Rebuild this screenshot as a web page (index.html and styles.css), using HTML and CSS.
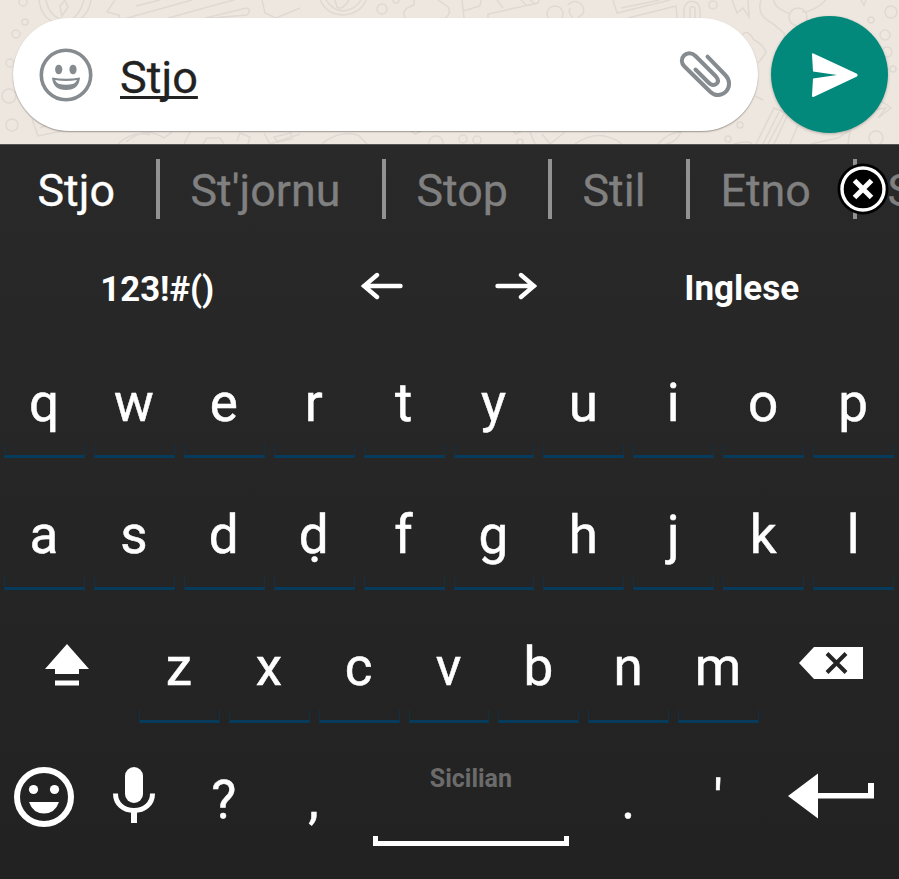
FILE: index.html
```html
<!DOCTYPE html>
<html lang="scn">
<head>
<meta charset="utf-8">
<title>Keyboard</title>
<link rel="stylesheet" href="styles.css">
</head>
<body>
<main class="screen">
  <section class="composer">
    <svg class="doodles" viewBox="0 0 899 144" aria-hidden="true">
      <circle cx="23" cy="2" r="4"/><circle cx="25" cy="22" r="3"/><circle cx="16" cy="34" r="4"/><circle cx="10" cy="63" r="4"/><circle cx="9" cy="96" r="7"/><circle cx="12" cy="125" r="6"/>
      <path d="M39 0Q42 24 65 24Q88 21 91 0M46 0Q49 15 60 19M84 0Q80 14 72 19M60 6L65 0L68 7L62 16Z"/>
      <path d="M115 0L107 12L119 15L120 20L192 0M136 6L160 0M168 18L248 -4M188 20L247 15Q252 10 247 8L205 18M262 0L265 13L276 18L300 8"/>
      <path d="M320 0Q327 15 344 15Q361 13 366 0M326 0Q333 11 344 11Q356 9 361 0M335 0L337 7Q342 11 349 0M405 18Q402 12 407 8L414 5L414 0M438 0Q444 4 448 7Q452 13 445 18M462 0L464 18M463 11L480 6L481 0M488 20L488 14L538 3L539 0M497 0L503 8M521 0L527 6M530 0L535 4"/>
      <circle cx="382" cy="9" r="5"/><circle cx="396" cy="0" r="3"/><circle cx="555" cy="14" r="8"/><path d="M568 5Q575 -2 582 5Q587 14 578 17M570 8Q568 14 573 17"/>
      <path d="M613 0L617 13L670 0M621 8L660 0M628 18L676 6L677 18M684 18V8Q688 -2 697 3Q701 7 700 18M690 18V8Q693 5 695 8V18"/>
      <circle cx="713" cy="5" r="4"/><path d="M732 0L737 13L743 8L749 17L748 0M761 0Q756 15 772 23L784 33Q786 43 782 49M774 0Q773 7 790 14M802 12Q814 12 826 0M861 0L864 5L866 0"/>
      <circle cx="798" cy="17" r="9"/><circle cx="871" cy="20" r="3"/><circle cx="891" cy="12" r="6"/><circle cx="885" cy="35" r="5"/><circle cx="887" cy="52" r="5"/><circle cx="893" cy="69" r="3"/>
      <path d="M742 35Q747 28 754 40Q764 45 766 53L758 63M755 96L763 100M874 96L891 108L878 118L886 108L870 110M750 70Q759 81 751 89"/>
      <path d="M32 119L38 136L92 125M40 128L52 123M118 144Q132 130 150 135M126 142Q145 126 164 138L172 132M184 144L190 132M203 144L207 138H220L224 144M237 141L240 133L250 137L248 144M264 133L270 144L300 134M274 137L291 133L292 139L278 142ZM322 144Q337 130 358 135L367 144M410 130L415 134L421 131M513 131L516 134L521 131M530 132L535 144M542 134L550 144M550 144L565 132M575 144Q599 127 622 144M658 144Q669 132 681 132Q676 143 666 144"/>
      <circle cx="436" cy="143" r="7"/><circle cx="463" cy="139" r="4"/><circle cx="477" cy="140" r="4"/><circle cx="520" cy="142" r="3"/><circle cx="728" cy="139" r="3"/><circle cx="740" cy="125" r="3"/><circle cx="876" cy="138" r="7"/>
      <path d="M756 144L774 108L788 114L774 144M763 144L779 112M768 144L784 114M790 144L798 125M734 144Q749 140 752 144M811 144L838 138L850 130L848 144"/>
    </svg>
    <div class="pill">
      <svg class="pill-smile" viewBox="0 0 54 54">
        <circle cx="27" cy="27" r="24.7" fill="none" stroke="#868b90" stroke-width="3.6"/>
        <ellipse cx="19.7" cy="21.5" rx="3.6" ry="4.8" fill="#868b90"/><ellipse cx="34" cy="21.5" rx="3.6" ry="4.8" fill="#868b90"/>
        <path d="M13 29.500Q27 32 41 29.500Q40 42 27 42Q14 42 13 29.500Z" fill="#868b90"/>
        <path d="M16 32Q27 34 38 32Q37 34.500 34.500 35.700Q27 38 19.500 35.700Q17 34.500 16 32Z" fill="#fff"/>
      </svg>
      <span class="draft">Stjo</span>
      <svg class="clip" viewBox="0 0 54 50">
        <path d="M28.500 6.700L46.700 25.500C51 30 51 36.500 47.500 41C43 46 36.500 46.500 31.500 42L5.500 16.500C2 13 2 8.500 5 5.500C8 2.500 13 2.500 16.500 6L37 26.500C39.500 29.500 39.500 32 37.500 33.800C35.500 35.500 32.500 35.500 30 33L16.500 19.500" fill="none" stroke="#868b90" stroke-width="4" stroke-linecap="round" stroke-linejoin="round"/>
      </svg>
    </div>
    <div class="send">
      <svg viewBox="0 0 117 117"><path d="M42.500 37.500Q41 36.800 41 38.500L42 55.500L66 59L42 62.500L41 79.500Q41 81.500 42.500 81L86 60.500Q87.500 59 86 57.800Z" fill="#fff"/></svg>
    </div>
  </section>

  <section class="keyboard">
    <div class="suggestions">
      <span class="word active w1">Stjo</span>
      <span class="word w2">St'jornu</span>
      <span class="word w3">Stop</span>
      <span class="word w4">Stil</span>
      <span class="word w5">Etno</span>
      <span class="word w6">S</span>
      <svg class="dismiss" viewBox="0 0 52 52">
        <circle cx="26" cy="26" r="25.500" fill="#000"/>
        <circle cx="26" cy="26" r="21" fill="none" stroke="#fff" stroke-width="3.400"/>
        <path d="M17.500 17.500L34.500 34.500M34.500 17.500L17.500 34.500" stroke="#fff" stroke-width="5"/>
      </svg>
    </div>

    <div class="toolbar">
      <span class="tool symbols">123!#()</span>
      <span class="tool"><svg class="arrow" viewBox="0 0 42 28"><path d="M39.500 14H3M16 3L3 14L16 25" /></svg></span>
      <span class="tool"><svg class="arrow" viewBox="0 0 42 28"><path d="M2.500 14H39M26 3L39 14L26 25" /></svg></span>
      <span class="tool">Inglese</span>
    </div>

    <div class="row">
      <span class="key lined">q</span><span class="key lined">w</span><span class="key lined">e</span><span class="key lined">r</span><span class="key lined">t</span><span class="key lined">y</span><span class="key lined">u</span><span class="key lined">i</span><span class="key lined">o</span><span class="key lined">p</span>
    </div>
    <div class="row">
      <span class="key lined">a</span><span class="key lined">s</span><span class="key lined">d</span><span class="key lined">ḍ</span><span class="key lined">f</span><span class="key lined">g</span><span class="key lined">h</span><span class="key lined">j</span><span class="key lined">k</span><span class="key lined">l</span>
    </div>
    <div class="row">
      <span class="key wide"><svg class="shift" viewBox="0 0 44 42"><path d="M22 0L44 25H34V30H10V25H0ZM10 36.500H34V41.500H10Z" fill="#fff"/></svg></span>
      <span class="key lined">z</span><span class="key lined">x</span><span class="key lined">c</span><span class="key lined">v</span><span class="key lined">b</span><span class="key lined">n</span><span class="key lined">m</span>
      <span class="key wide"><svg class="backspace" viewBox="0 0 64 32"><path d="M0 16L15 0H64V32H15Z" fill="#fff"/><path d="M28 6.500L47 25.500M47 6.500L28 25.500" stroke="#242424" stroke-width="4"/></svg></span>
    </div>
    <div class="row">
      <span class="key"><svg class="emoji" viewBox="0 0 60 60"><circle cx="30" cy="30" r="27" fill="none" stroke="#fff" stroke-width="6"/><circle cx="19.500" cy="22.500" r="4.600" fill="#fff"/><circle cx="40.500" cy="22.500" r="4.600" fill="#fff"/><path d="M15 35H45Q41 46.500 30 46.500Q19 46.500 15 35Z" fill="#fff"/></svg></span>
      <span class="key"><svg class="mic" viewBox="0 0 42 56"><rect x="12" y="0" width="18" height="36" rx="9" fill="#fff"/><path d="M2.500 26.500C2.500 37 10.500 43.500 21 43.500S39.500 37 39.500 26.500" fill="none" stroke="#fff" stroke-width="5"/><path d="M21 43V56" stroke="#fff" stroke-width="6"/></svg></span>
      <span class="key">?</span>
      <span class="key">,</span>
      <span class="key space"><span class="language">Sicilian</span><span class="bar"></span></span>
      <span class="key">.</span>
      <span class="key">'</span>
      <span class="key wide"><svg class="enter" viewBox="0 0 86 46"><path d="M0 23L30 0.500V20H80V10H86V25.500H30V45.500Z" fill="#fff"/></svg></span>
    </div>
  </section>
</main>
</body>
</html>
```
FILE: styles.css
```css
* { box-sizing: border-box; }

body {
  margin: 0;
  font-family: Roboto, "Liberation Sans", sans-serif;
  background: #222;
}

svg { display: block; }

.screen {
  width: 899px;
  height: 879px;
  overflow: hidden;
}

.composer {
  position: relative;
  height: 144px;
  padding: 16px 11px 0 12.5px;
  display: flex;
  justify-content: space-between;
  overflow: hidden;
  background: #eee7df;
}

.doodles {
  position: absolute;
  inset: 0;
  width: 899px;
  height: 144px;
  fill: none;
  stroke: #dfd9d3;
  stroke-width: 1.5;
}

.pill {
  position: relative;
  display: flex;
  align-items: center;
  width: 745.5px;
  height: 113px;
  margin-top: 2px;
  padding: 0 25px 0 26px;
  border-radius: 57px;
  background: #fff;
  box-shadow: 0 1px 1.5px rgba(0, 0, 0, 0.35);
}

.pill-smile { width: 54px; height: 54px; margin-top: 1px; }

.draft {
  flex: 1;
  margin: 6px 0 0 27.5px;
  font-size: 45px;
  line-height: 54px;
  color: #222;
  -webkit-text-stroke: 0.3px;
  text-decoration: underline;
  text-decoration-thickness: 3px;
  text-decoration-skip-ink: none;
  text-underline-offset: 3px;
}

.clip { width: 54px; height: 50px; margin-top: 1px; }

.send {
  position: relative;
  width: 117px;
  height: 117px;
  border-radius: 50%;
  background: #03897b;
  box-shadow: 0 1px 3px rgba(0, 0, 0, 0.25);
}

.keyboard {
  height: 735px;
  border-top: 1px solid #555;
  background: linear-gradient(#292929, #222);
  color: #fff;
}

.suggestions {
  position: relative;
  display: flex;
  height: 85px;
  padding-top: 14px;
  overflow: hidden;
}

.word {
  flex: none;
  height: 60px;
  padding-left: 30.5px;
  border-right: 4px solid #929292;
  font-size: 44.8px;
  line-height: 64px;
  color: #808080;
  -webkit-text-stroke: 0.3px;
}

.word.active { padding-left: 37.5px; color: #fff; }
.w1 { width: 160px; }
.w2 { width: 226px; }
.w3 { width: 166px; }
.w4 { width: 138px; }
.w5 { width: 167px; }
.w6 { width: 100px; }

.dismiss {
  position: absolute;
  left: 837px;
  top: 18px;
  width: 52px;
  height: 52px;
}

.toolbar {
  display: grid;
  grid-template-columns: 35fr 15fr 15fr 35fr;
  height: 98px;
  padding-top: 36px;
}

.tool {
  display: flex;
  justify-content: center;
  font-size: 35px;
  line-height: 46px;
  font-weight: 700;
}

.tool.symbols { font-size: 34.7px; }

.arrow {
  width: 42px;
  height: 28px;
  margin-top: 6px;
  margin-left: -1px;
  fill: none;
  stroke: #fff;
  stroke-width: 4.4;
  stroke-linecap: round;
}

.row {
  display: flex;
  height: 132.2px;
  margin: 0 0.5px 0 -0.5px;
}

.key {
  position: relative;
  display: flex;
  justify-content: center;
  flex: 2 0 0;
  padding: 44px 1px 0 0;
  margin: 0 4.5px;
  font-size: 53px;
  line-height: 62px;
  -webkit-text-stroke: 0.5px;
}

.key.wide { flex: 0 0 126px; }

.lined::after {
  content: "";
  position: absolute;
  left: 0;
  right: 0;
  bottom: 2px;
  height: 10px;
  border: 1px solid #123044;
  border-width: 0 1px 3px;
  border-bottom-color: #073b5b;
}

.key.space {
  flex: 0 0 215.75px;
  flex-direction: column;
  justify-content: flex-start;
  align-items: center;
  padding-top: 39.5px;
}

.language {
  font-size: 25px;
  line-height: 30px;
  font-weight: 700;
  color: #6b6b6b;
  -webkit-text-stroke: 0;
}

.bar {
  width: 196px;
  height: 10px;
  margin-top: 42px;
  border: 5px solid #fff;
  border-top: 0;
}

.shift { width: 44px; height: 42px; margin-top: 8px; }
.backspace { width: 64px; height: 32px; margin-top: 11px; }
.emoji { width: 60px; height: 60px; margin-top: -2px; }
.mic { width: 42px; height: 56px; margin-top: -2px; }
.enter { width: 86px; height: 46px; margin-top: 4px; }
```
